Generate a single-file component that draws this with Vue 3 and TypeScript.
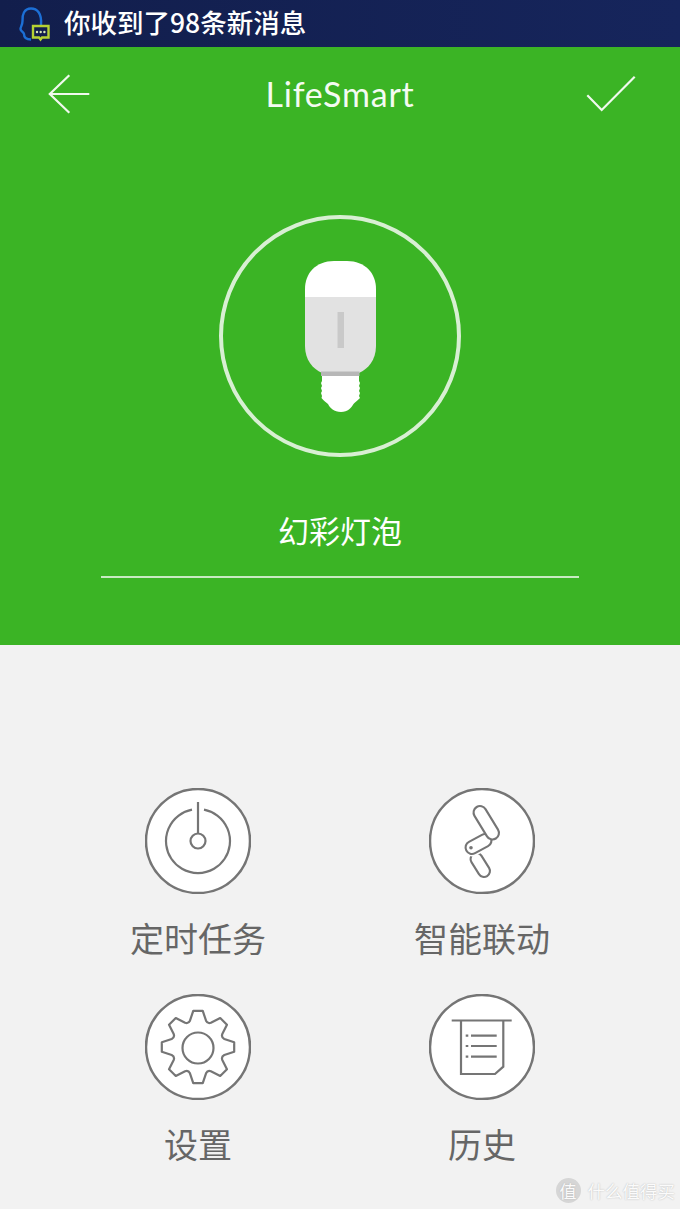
<script setup lang="ts">
const cx = 68
const cy = 62
const polar = (deg: number, r: number): string => {
  const a = ((deg - 90) * Math.PI) / 180
  return `${(cx + r * Math.cos(a)).toFixed(2)} ${(cy + r * Math.sin(a)).toFixed(2)}`
}
const gearPath = Array.from({ length: 8 }, (_, i) => {
  const t = i * 45
  const head = i === 0 ? `M${polar(t - 7.5, 36.5)}` : `L${polar(t - 7.5, 36.5)}`
  return `${head} L${polar(t + 7.5, 36.5)} L${polar(t + 17, 27.5)} Q${polar(t + 22.5, 25)} ${polar(t + 28, 27.5)}`
}).join(' ') + ' Z'
const docLines = [50.7, 61, 71.7]
</script>

<template>
  <main class="page">
    <div class="notice">
      <svg class="notice-icon" width="34" height="38" viewBox="18 4 34 38">
        <path class="head" d="M41 24C42 12 37 7.5 31 7.5C24 7.5 22 14 22.5 20C22.5 24 20.5 26 20.5 28C20.5 30 23.5 31 24 33C24 36 26 38.5 31 38.5" />
        <path class="bubble" d="M33 25H48.5V36.5H42L40.5 38.5L39 36.5H33Z" />
        <circle cx="37" cy="31" r="1.2" fill="#d8e8b8" />
        <circle cx="40.7" cy="31" r="1.2" fill="#d8e8b8" />
        <circle cx="44.4" cy="31" r="1.2" fill="#d8e8b8" />
      </svg>
      <span class="notice-text">你收到了98条新消息</span>
    </div>

    <section class="hero">
      <header class="topbar">
        <svg class="back" width="44" height="44" viewBox="47 72 44 44">
          <path d="M89.3 94H50M69.3 75.3L49.8 94L69.3 112.7" />
        </svg>
        <span class="logo">LifeSmart</span>
        <svg class="check" width="52" height="40" viewBox="585 76 52 40">
          <path d="M587.3 97.3L601.7 112L634.7 78.7" />
        </svg>
      </header>

      <svg class="device" width="242" height="242" viewBox="9 10 242 242">
        <circle cx="130" cy="131" r="119" fill="none" stroke="#d8efd3" stroke-width="4" />
        <path d="M95 92V84C95 68 106 56 124 56H137C155 56 166 68 166 84V92Z" fill="#fff" />
        <path d="M95 92H166V141C166 155 158 164 149 168H112C103 164 95 155 95 141Z" fill="#e2e2e2" />
        <rect x="127.500" y="107" width="6.500" height="36" fill="#c9c9c9" />
        <rect x="111" y="166.500" width="38.500" height="4.500" fill="#b7b7b7" />
        <path d="M112 171H149V176L150 178L149 181L150 183L149 186L150 188L149 191L150 193C147 196 145 197 143.500 199C141 203 138 207 131 207C124 207 120 203 118 199C116 197 114 196 111.500 193L112 191L111 188L112 186L111 183L112 181L111 178L112 176Z" fill="#fff" />
      </svg>

      <h1 class="device-name">幻彩灯泡</h1>
      <div class="rule"></div>
    </section>

    <section class="actions">
      <div class="action">
        <svg class="action-icon" width="106" height="106" viewBox="15 8 106 106">
          <circle class="ring" cx="68" cy="61" r="52" />
          <path d="M74 29.600A32 32 0 1 1 62 29.600" />
          <path d="M68 22V53.500" />
          <circle cx="68" cy="61" r="7.500" fill="none" />
        </svg>
        <span class="label">定时任务</span>
      </div>

      <div class="action">
        <svg class="action-icon" width="106" height="106" viewBox="14 8 106 106">
          <circle class="ring" cx="67" cy="61" r="52" />
          <line class="cap-o" x1="61.500" y1="79" x2="69" y2="91" stroke-width="14" />
          <line class="cap-i" x1="61.500" y1="79" x2="69" y2="91" stroke-width="9.800" />
          <line class="gap" x1="57" y1="67.500" x2="70" y2="60.500" stroke-width="18" />
          <line class="cap-o" x1="57" y1="67.500" x2="70" y2="60.500" stroke-width="15" />
          <line class="cap-i" x1="57" y1="67.500" x2="70" y2="60.500" stroke-width="10.800" />
          <line class="cap-o" x1="65" y1="32.500" x2="77.500" y2="53" stroke-width="15" />
          <line class="cap-i" x1="65" y1="32.500" x2="77.500" y2="53" stroke-width="10.800" />
          <circle cx="56" cy="67.700" r="1.800" fill="#757575" stroke="none" />
        </svg>
        <span class="label">智能联动</span>
      </div>

      <div class="action">
        <svg class="action-icon" width="106" height="106" viewBox="15 9 106 106">
          <circle class="ring" cx="68" cy="62" r="52" />
          <path :d="gearPath" stroke-linejoin="round" />
          <circle cx="68" cy="63" r="15.500" fill="none" />
        </svg>
        <span class="label">设置</span>
      </div>

      <div class="action">
        <svg class="action-icon" width="106" height="106" viewBox="14 9 106 106">
          <circle class="ring" cx="67" cy="62" r="52" />
          <path d="M36.700 35.500H96.700" />
          <path d="M46 35.500V89H80L88.300 81.700V35.500" />
          <template v-for="y in docLines" :key="y">
            <path :d="`M50.700 ${y}H53.300M56 ${y}H81.700`" />
          </template>
        </svg>
        <span class="label">历史</span>
      </div>
    </section>

    <div class="watermark">
      <span class="wm-badge">值</span>
      <span class="wm-text">什么值得买</span>
    </div>
  </main>
</template>

<style scoped>
.page {
  position: relative;
  width: 680px;
  height: 1209px;
  overflow: hidden;
  background: #f2f2f2;
  font-family: "Noto Sans CJK SC", "Noto Sans", sans-serif;
}
.notice {
  height: 47px;
  display: flex;
  align-items: center;
  gap: 12px;
  padding-left: 18px;
  background: linear-gradient(90deg, #121e4c, #16255c);
}
.notice-icon { flex: none; }
.notice-icon path { fill: none; stroke-width: 2.400; }
.head { stroke: #1c6fd6; }
.bubble { stroke: #b6d233; }
.notice-text {
  color: #fff;
  font-size: 26.500px;
  font-weight: 500;
  line-height: 43px;
  padding-bottom: 4px;
}
.hero {
  height: 598px;
  background: #3bb425;
  display: flex;
  flex-direction: column;
  align-items: center;
}
.topbar {
  width: 100%;
  height: 94px;
  box-sizing: border-box;
  padding: 0 45px;
  display: grid;
  grid-template-columns: 1fr auto 1fr;
  align-items: center;
}
.topbar svg path {
  fill: none;
  stroke: #f0f9ee;
  stroke-width: 2.200;
}
.back { margin-left: 2px; }
.check { justify-self: end; margin-right: -2px; }
.logo {
  color: #f4fbf2;
  font-family: Lato, "Noto Sans", sans-serif;
  font-size: 34px;
  font-weight: 400;
  letter-spacing: 0.8px;
  line-height: 94px;
}
.device {
  margin-top: 74px;
  flex: none;
}
.device-name {
  margin: 49px 0 0;
  color: #fff;
  font-size: 31px;
  font-weight: 400;
  line-height: 48px;
}
.rule {
  width: 478px;
  height: 2px;
  margin-top: 22px;
  background: rgba(255, 255, 255, 0.72);
}
.actions {
  padding: 143px 56px 0;
  display: grid;
  grid-template-columns: 284px 284px;
  grid-auto-rows: 206px;
}
.action {
  display: flex;
  flex-direction: column;
  align-items: center;
}
.action-icon {
  flex: none;
  fill: none;
  stroke: #757575;
  stroke-width: 2.200;
}
.action-icon path { fill: none; }
.ring {
  fill: #fff;
  stroke-width: 2.500;
}
.cap-o { stroke: #757575; stroke-linecap: round; }
.cap-i { stroke: #fff; stroke-linecap: round; }
.gap { stroke: #fff; stroke-linecap: round; }
.label {
  margin-top: 19px;
  color: #666;
  font-size: 34px;
  line-height: 50px;
}
.watermark {
  position: absolute;
  right: 5px;
  bottom: 6px;
  display: flex;
  align-items: center;
  gap: 7px;
  color: #fbfbfb;
  text-shadow: 0 0 1.500px #b0b0b0;
}
.wm-badge {
  width: 25px;
  height: 25px;
  border-radius: 50%;
  background: #d6d6d6;
  font-size: 17px;
  line-height: 25px;
  text-align: center;
}
.wm-text {
  font-size: 17.500px;
  line-height: 25px;
}
</style>
